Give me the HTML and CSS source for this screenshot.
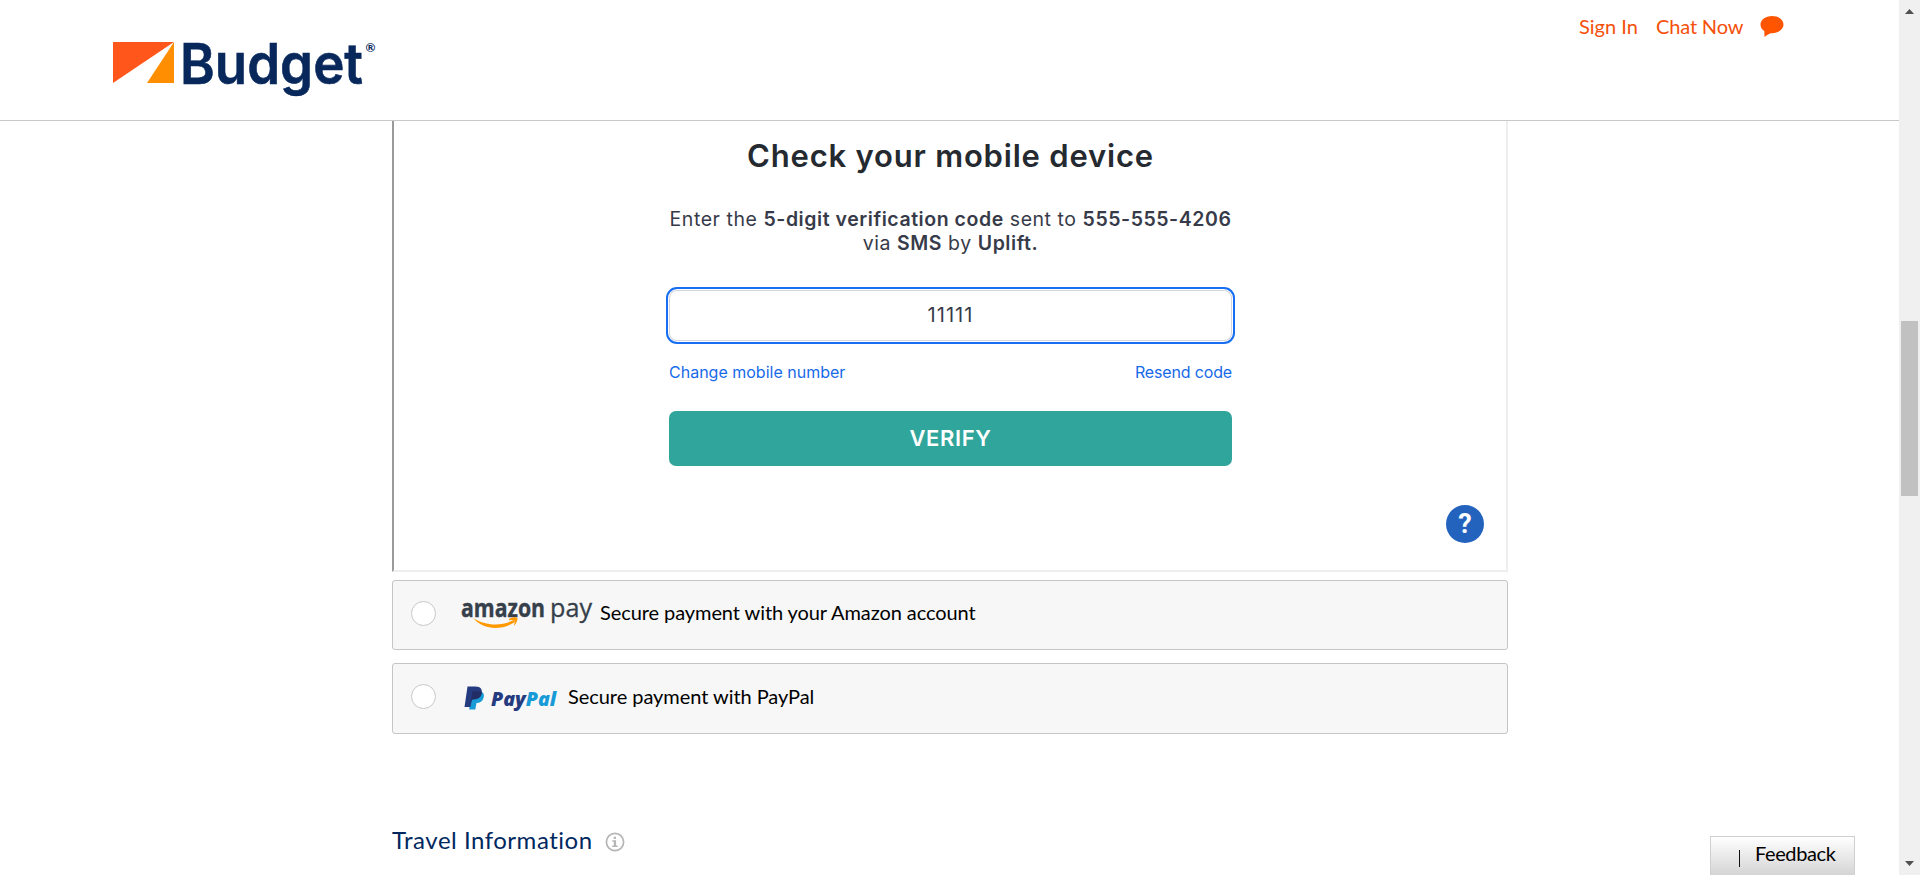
FILE: index.html
```html
<!DOCTYPE html>
<html lang="en">
<head>
<meta charset="utf-8">
<title>Budget - Payment</title>
<link rel="stylesheet" href="styles.css">
</head>
<body>
<div class="page">
  <header class="header">
    <svg class="logo" width="268" height="64" viewBox="0 0 268 64" role="img" aria-label="Budget">
      <path d="M0 0H61L0 41Z" fill="#ff571b"/>
      <path d="M61 0V41H34Z" fill="#ff8f00"/>
      <text class="logo-word" x="67" y="41.500" textLength="183" lengthAdjust="spacingAndGlyphs">Budget</text>
      <text class="logo-mark" x="252.500" y="10">®</text>
    </svg>
    <nav class="top-links">
      <a class="sign-in">Sign In</a>
      <a class="chat">Chat Now</a>
      <svg class="bubble" width="24" height="22" viewBox="0 0 24 22"><path d="M12 0C18.400 0 23.500 3.700 23.500 8.600S18.400 17.200 12 17.200L10.500 17.300C9 18.200 6.500 19.300 4.500 21L4.300 15C1.800 13.500.5 11.300.5 8.600.5 3.700 5.600 0 12 0Z" fill="#ff5500"/></svg>
    </nav>
  </header>
  <main class="content">
    <section class="frame">
      <h1 class="title">Check your mobile device</h1>
      <p class="message"><span class="line1">Enter the <b>5-digit verification code</b> sent to <b>555-555-4206</b></span><br><span class="line2">via <b>SMS</b> by <b>Uplift.</b></span></p>
      <div class="code">11111</div>
      <div class="links"><a class="change">Change mobile number</a><a class="resend">Resend code</a></div>
      <button class="verify">VERIFY</button>
      <div class="help">?</div>
    </section>
    <div class="option amazon">
      <span class="radio"></span>
      <svg class="amazon-logo" width="134" height="32" viewBox="0 0 134 32" role="img" aria-label="amazon pay">
        <text class="amazon-word" x="0" y="19" textLength="84" lengthAdjust="spacingAndGlyphs">amazon</text>
        <text class="pay-word" x="89" y="19" textLength="42" lengthAdjust="spacingAndGlyphs">pay</text>
        <path d="M12 20C24 28 41 28.500 52.500 22L54 23.700C41 33 22 32 12 20Z" fill="#ff9900"/>
        <path d="M48 21C51 19 54.500 18.700 56.500 19.800 56.700 23 55 26 52.700 28 53.400 25.600 54 23.300 53.400 22.500 52.500 21.600 50.600 21.900 48 22.200Z" fill="#ff9900"/>
      </svg>
      <span class="label amazon-label">Secure payment with your Amazon account</span>
    </div>
    <div class="option paypal">
      <span class="radio"></span>
      <svg class="paypal-logo" width="96" height="26" viewBox="0 0 96 26" role="img" aria-label="PayPal">
        <path d="M5.500 5H14C20 5 20.500 9 19.500 12 18.500 15.500 16 17 12.500 17L11.300 23.500H5.300Z" fill="#179bd7"/>
        <path d="M3.500 .5H11.500C17 .5 18.500 3.500 17.500 7.500 16.500 12 13 13.500 8 13.500L6.500 21H0.500Z" fill="#253b80"/>
        <path d="M8.500 5.500H17.700C18.300 10.500 14.500 13.500 8 13.500L6.700 16.500Z" fill="#222d65"/>
        <text class="paypal-word" x="27" y="20"><tspan fill="#253b80">Pay</tspan><tspan fill="#179bd7">Pal</tspan></text>
      </svg>
      <span class="label paypal-label">Secure payment with PayPal</span>
    </div>
    <div class="travel">
      <h2 class="travel-title">Travel Information</h2>
      <svg width="20" height="20" viewBox="0 0 20 20"><circle cx="10" cy="10" r="8.600" fill="none" stroke="#b5b5b5" stroke-width="1.700"/><path d="M8.700 4.800h2.300v2.200H8.700zM7.300 8.300h3.800v5.200h1.500v1.400H7.300v-1.400h1.500V9.700H7.300z" fill="#b5b5b5"/></svg>
    </div>
  </main>
  <div class="feedback"><span class="feedback-bar"></span><span class="feedback-text">Feedback</span></div>
</div>
<div class="scrollbar"><span class="arrow up"></span><span class="thumb"></span><span class="arrow down"></span></div>
</body>
</html>
```
FILE: styles.css
```css
* { box-sizing: border-box; }
body { margin: 0; display: flex; width: 1920px; height: 875px; overflow: hidden; background: #fff; font-family: Lato, "Open Sans", sans-serif; font-variant-ligatures: none; }
.page { position: relative; width: 1899px; height: 875px; overflow: hidden; }
.header { display: flex; justify-content: space-between; align-items: flex-start; height: 121px; border-bottom: 1px solid #c8c8c8; padding: 0 115px 0 113px; }
.logo { margin-top: 42px; overflow: visible; }
.logo-word { font: 600 56px Inter, sans-serif; fill: #08285c; stroke: #08285c; stroke-width: .6px; }
.logo-mark { font: 700 12px Lato, sans-serif; fill: #08285c; }
.top-links { display: flex; align-items: flex-start; padding-top: 14px; font-size: 20px; line-height: 24px; color: #f4500a; white-space: nowrap; }
.sign-in { width: 77px; }
.chat { width: 104px; letter-spacing: -.15px; }
.bubble { margin-top: 2px; }
.content { width: 1116px; margin-left: 392px; }
.frame { position: relative; display: flex; flex-direction: column; align-items: center; height: 451px; border: solid #eee; border-width: 0 2px 2px 0; border-left: 2px solid #9a9a9a; padding: 16px 0 0 1px; font-family: Inter, sans-serif; color: #373b49; }
.title { margin: 0; text-align: center; font-size: 31px; line-height: 38px; font-weight: 600; letter-spacing: .8px; color: #252a31; white-space: nowrap; }
.message { margin: 32px 0 0; text-align: center; font-size: 19.5px; line-height: 24px; letter-spacing: .55px; white-space: nowrap; }
.message b { font-weight: 600; }
.code { margin: 32px 0 0; width: 569px; height: 57px; border: 2px solid #176ef2; border-radius: 11px; box-shadow: inset 0 0 0 1px #fff, inset 0 0 0 2px #d3d6dc; text-align: center; font-size: 20px; letter-spacing: 1.1px; line-height: 53px; }
.links { display: flex; justify-content: space-between; margin-top: 18px; width: 563px; font-size: 16px; line-height: 20px; color: #176ae8; white-space: nowrap; }
.resend { letter-spacing: -.15px; }
.verify { display: block; margin-top: 29px; width: 563px; height: 55px; padding: 0; border: 0; border-radius: 7px; background: #2fa59b; color: #fff; font: 600 22px/55px Inter, sans-serif; letter-spacing: .6px; text-align: center; }
.help { position: absolute; right: 22px; bottom: 27px; width: 38px; height: 38px; border-radius: 50%; background: #2463bd; color: #fff; font-family: Roboto, sans-serif; font-weight: 700; font-size: 27px; line-height: 39px; text-align: center; }
.option { display: flex; align-items: flex-start; border: 1px solid #c5c5c5; border-radius: 3px; background: #f7f7f7; }
.amazon { height: 70px; margin-top: 8px; }
.paypal { height: 71px; margin-top: 13px; }
.radio { width: 25px; height: 25px; margin: 20px 0 0 18px; border: 1px solid #c8c8c8; border-radius: 50%; background: #fff; }
.amazon-logo { margin: 17px 0 0 25px; overflow: visible; }
.amazon-word { font: 700 25px "Open Sans", sans-serif; fill: #35404b; stroke: #35404b; stroke-width: .4px; }
.pay-word { font: 400 26px "Open Sans", sans-serif; fill: #35404b; stroke: #35404b; stroke-width: .3px; }
.paypal-logo { margin: 22px 0 0 28px; overflow: visible; }
.paypal-word { font: italic 800 19.6px "Open Sans", sans-serif; }
.label { font-size: 20px; line-height: 24px; color: #000; white-space: nowrap; }
.amazon-label { margin: 19px 0 0 5px; letter-spacing: -.08px; }
.paypal-label { margin: 20px 0 0 8px; letter-spacing: -.05px; }
.travel { display: flex; align-items: flex-start; margin-top: 91px; }
.travel svg { margin: 7px 0 0 14px; }
.travel-title { margin: 0; width: 199px; font-weight: 400; font-size: 24px; line-height: 30px; letter-spacing: .52px; color: #00285f; white-space: nowrap; }
.feedback { position: absolute; left: 1710px; top: 836px; display: flex; width: 145px; height: 42px; border: 1px solid #cfcfcf; background: linear-gradient(#fff, #d2d2d2); font-size: 20px; line-height: 24px; color: #000; }
.feedback-bar { width: 1px; height: 17px; margin: 13px 15px 0 28px; background: #111; }
.feedback-text { padding-top: 4px; letter-spacing: -.4px; }
.scrollbar { display: flex; flex-direction: column; align-items: center; width: 21px; height: 875px; background: #f0f0f0; }
.arrow { width: 9px; height: 5px; background: #505050; }
.up { margin-top: 9px; clip-path: polygon(50% 0, 100% 100%, 0 100%); }
.thumb { width: 17px; height: 175px; margin-top: 307px; background: #c1c1c1; }
.down { margin-top: 365px; clip-path: polygon(0 0, 100% 0, 50% 100%); }
```
